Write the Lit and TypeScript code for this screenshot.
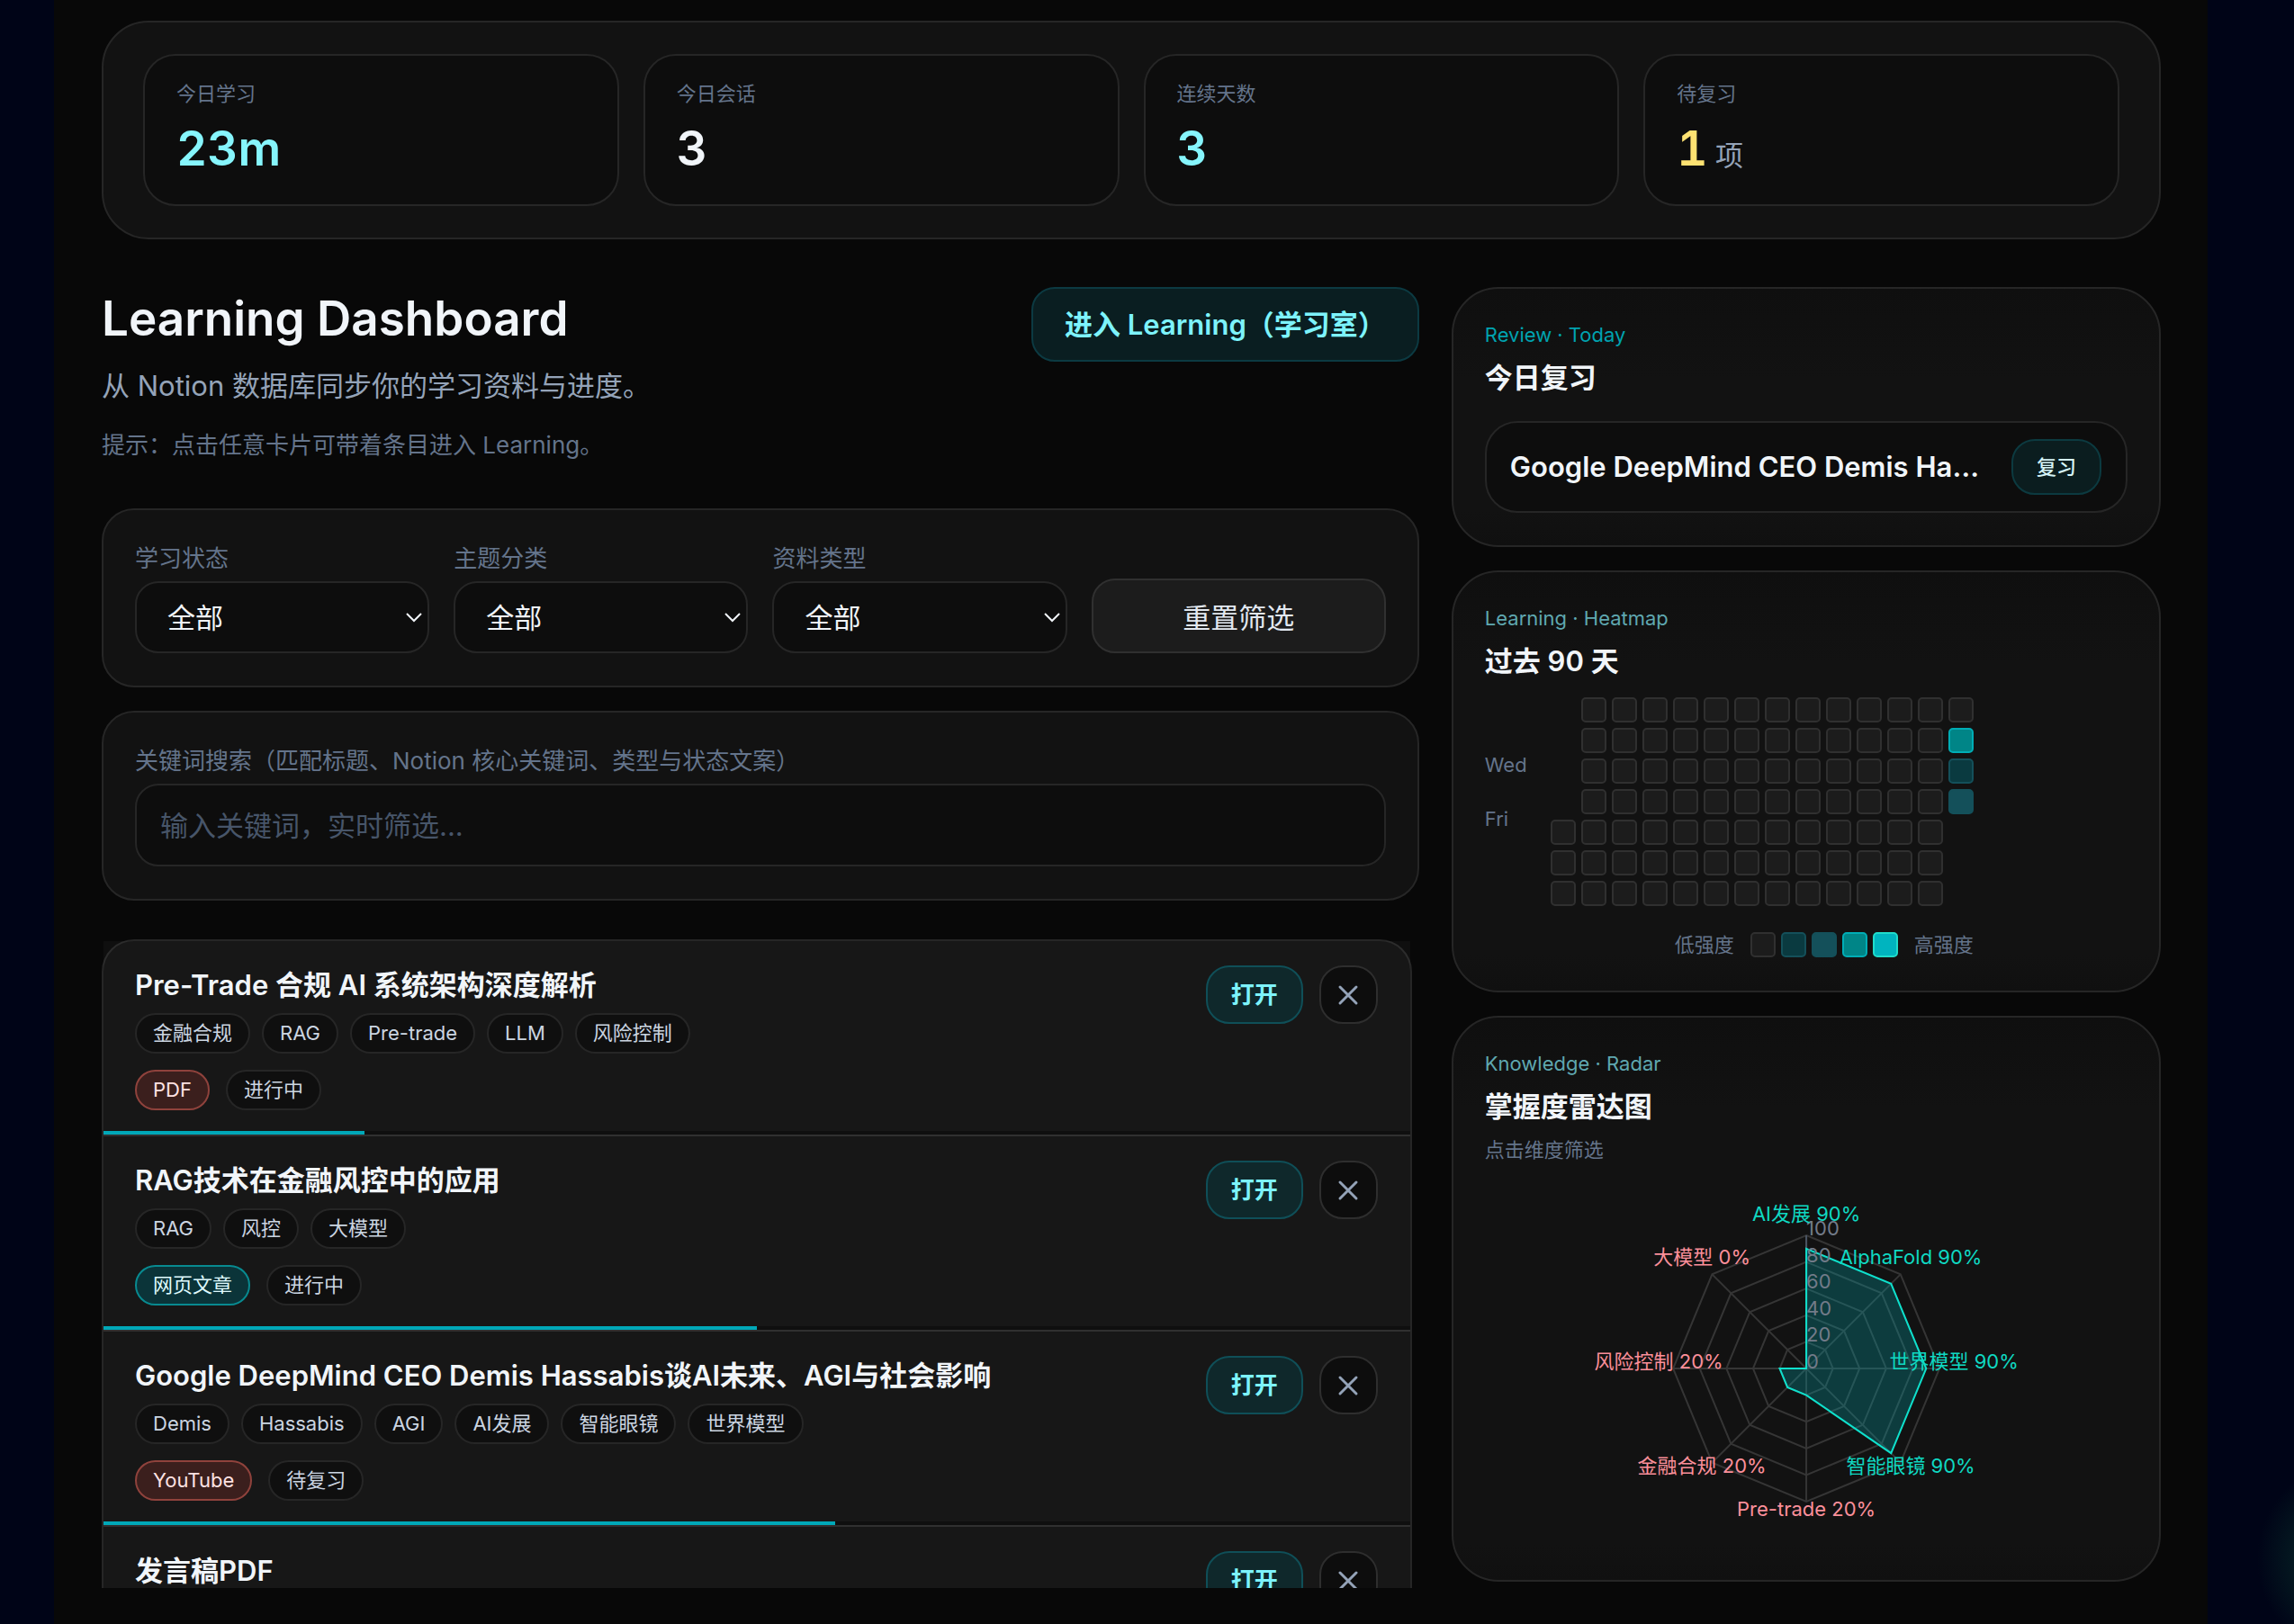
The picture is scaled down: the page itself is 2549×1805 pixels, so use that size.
import { LitElement, html, css, svg } from "lit";
import { customElement, state } from "lit/decorators.js";
import { classMap } from "lit/directives/class-map.js";
import { styleMap } from "lit/directives/style-map.js";

interface Entry {
  title: string;
  keywords: string[];
  type: string;
  tone: "red" | "teal";
  status: string;
  progress: number;
}

const STATS = [
  { label: "今日学习", value: "23m", tone: "cyan", unit: "" },
  { label: "今日会话", value: "3", tone: "plain", unit: "" },
  { label: "连续天数", value: "3", tone: "cyan", unit: "" },
  { label: "待复习", value: "1", tone: "amber", unit: "项" },
];

const FILTERS = [
  { id: "status", label: "学习状态" },
  { id: "topic", label: "主题分类" },
  { id: "kind", label: "资料类型" },
];

const ENTRIES: Entry[] = [
  {
    title: "Pre-Trade 合规 AI 系统架构深度解析",
    keywords: ["金融合规", "RAG", "Pre-trade", "LLM", "风险控制"],
    type: "PDF",
    tone: "red",
    status: "进行中",
    progress: 20,
  },
  {
    title: "RAG技术在金融风控中的应用",
    keywords: ["RAG", "风控", "大模型"],
    type: "网页文章",
    tone: "teal",
    status: "进行中",
    progress: 50,
  },
  {
    title: "Google DeepMind CEO Demis Hassabis谈AI未来、AGI与社会影响",
    keywords: ["Demis", "Hassabis", "AGI", "AI发展", "智能眼镜", "世界模型"],
    type: "YouTube",
    tone: "red",
    status: "待复习",
    progress: 56,
  },
  {
    title: "发言稿PDF",
    keywords: [],
    type: "PDF",
    tone: "red",
    status: "进行中",
    progress: 0,
  },
];

const WEEKDAYS = ["", "", "Wed", "", "Fri", "", ""];
const WEEKS = 14;
// Activity level by "week-weekday"; every other day is level 0.
const ACTIVITY: Record<string, number> = { "13-1": 3, "13-2": 1, "13-3": 2 };

const SKILLS = [
  { name: "AI发展", value: 90 },
  { name: "AlphaFold", value: 90 },
  { name: "世界模型", value: 90 },
  { name: "智能眼镜", value: 90 },
  { name: "Pre-trade", value: 20 },
  { name: "金融合规", value: 20 },
  { name: "风险控制", value: 20 },
  { name: "大模型", value: 0 },
];

const panelBase = css`
  *,
  *::before,
  *::after {
    box-sizing: border-box;
  }
  h1,
  h2,
  h3,
  p,
  ul,
  dl,
  dd {
    margin: 0;
    padding: 0;
  }
  button,
  input,
  select {
    font: inherit;
    color: inherit;
    margin: 0;
  }
  button {
    cursor: pointer;
  }
  .panel {
    border: 2px solid #262626;
    background: #121212;
  }
  .side {
    border-radius: 52px;
    padding: 35px 35px 36px;
    background: linear-gradient(#0f0f0f, #121212 100px, #121212 calc(100% - 40px), #101010);
  }
  .kicker {
    font-size: 22px;
    line-height: 32px;
    color: #5fa8b0;
  }
  .kicker.strong {
    color: #00a3b0;
  }
  .name {
    font-size: 31px;
    line-height: 44px;
    font-weight: 600;
    color: #f1f5f9;
    margin-top: 10px;
  }
`;

@customElement("review-card")
export class ReviewCard extends LitElement {
  static styles = [
    panelBase,
    css`
      :host {
        display: block;
      }
      .due {
        display: flex;
        align-items: center;
        gap: 27px;
        margin-top: 26px;
        padding: 18px 27px 18px 26px;
        border: 2px solid #262626;
        border-radius: 36px;
        background: #0d0d0d;
      }
      .what {
        flex: 1;
        min-width: 0;
        overflow: hidden;
        white-space: nowrap;
        text-overflow: ellipsis;
        font-size: 31px;
        line-height: 44px;
        font-weight: 600;
        color: #f1f5f9;
      }
      .go {
        flex: none;
        border: 2px solid #0c3a40;
        border-radius: 26px;
        padding: 13px 26px;
        background: #0b1d1f;
        font-size: 22px;
        line-height: 32px;
        font-weight: 500;
        color: #d5f3f6;
      }
    `,
  ];

  render() {
    return html`<section class="panel side">
      <p class="kicker strong">Review · Today</p>
      <h2 class="name">今日复习</h2>
      <div class="due">
        <span class="what">Google DeepMind CEO Demis Hassabis谈AI未来、AGI与社会影响</span>
        <button class="go" type="button">复习</button>
      </div>
    </section>`;
  }
}

@customElement("heatmap-card")
export class HeatmapCard extends LitElement {
  static styles = [
    panelBase,
    css`
      :host {
        display: block;
      }
      .map {
        display: inline-grid;
        grid-template-columns: auto auto;
        column-gap: 26px;
        row-gap: 29px;
        margin-top: 18px;
        font-size: 22px;
        line-height: 30px;
        color: #64748b;
      }
      .side {
        padding-bottom: 37px;
      }
      .days {
        display: grid;
        grid-auto-rows: 30px;
        align-content: start;
      }
      .cells {
        display: grid;
        grid-template-rows: repeat(7, 28px);
        grid-auto-flow: column;
        grid-auto-columns: 28px;
        gap: 6px;
      }
      .cell {
        width: 28px;
        height: 28px;
        border-radius: 5px;
        border: 2px solid #303030;
        background: #1c1c1c;
      }
      .blank {
        visibility: hidden;
      }
      .l1 {
        background: #0a3a40;
        border-color: #14505a;
      }
      .l2 {
        background: #14505a;
        border-color: #14505a;
      }
      .l3 {
        background: #008587;
        border-color: #00adb5;
      }
      .l4 {
        background: #00b4bf;
        border-color: #1fdccb;
      }
      .legend {
        grid-column: 1 / -1;
        display: flex;
        justify-content: flex-end;
        align-items: center;
        gap: 18px;
        line-height: 28px;
      }
      .scale {
        display: flex;
        gap: 6px;
      }
    `,
  ];

  private cell(week: number, day: number) {
    const blank = (week === 0 && day < 4) || (week === WEEKS - 1 && day > 3);
    const level = ACTIVITY[`${week}-${day}`] ?? 0;
    return html`<span class=${classMap({ cell: true, blank, [`l${level}`]: true })}></span>`;
  }

  render() {
    return html`<section class="panel side">
      <p class="kicker">Learning · Heatmap</p>
      <h2 class="name">过去 90 天</h2>
      <div class="map">
        <div class="days">${WEEKDAYS.map((d) => html`<span>${d}</span>`)}</div>
        <div class="cells">
          ${Array.from({ length: WEEKS * 7 }, (_, i) => this.cell(Math.floor(i / 7), i % 7))}
        </div>
        <div class="legend">
          <span>低强度</span>
          <span class="scale">
            ${[0, 1, 2, 3, 4].map((l) => html`<span class="cell l${l}"></span>`)}
          </span>
          <span>高强度</span>
        </div>
      </div>
    </section>`;
  }
}

@customElement("radar-card")
export class RadarCard extends LitElement {
  static styles = [
    panelBase,
    css`
      :host {
        display: block;
      }
      .hint {
        font-size: 22px;
        line-height: 32px;
        color: #64748b;
        margin-top: 10px;
      }
      .chart {
        display: block;
        width: 100%;
        height: 426px;
        overflow: visible;
        font-size: 22px;
      }
      .grid {
        fill: none;
        stroke: #353535;
        stroke-width: 2;
      }
      .axis {
        stroke: #4b5563;
        stroke-width: 2;
      }
      .area {
        fill: #00adb5;
        fill-opacity: 0.27;
        stroke: #0fe0cc;
        stroke-width: 2;
      }
      .tick {
        fill: #727b89;
      }
      .label {
        text-anchor: middle;
        fill: #0fd9c2;
      }
      .low {
        fill: #fb8f9a;
      }
    `,
  ];

  private point(index: number, radius: number): [number, number] {
    const angle = (index * Math.PI) / 4;
    return [Math.sin(angle) * radius, -Math.cos(angle) * radius];
  }

  render() {
    const full = 148;
    const ring = (r: number) => SKILLS.map((_, i) => this.point(i, r).join(",")).join(" ");
    const area = SKILLS.map((s, i) => this.point(i, (full * s.value) / 100).join(",")).join(" ");
    return html`<section class="panel side">
      <p class="kicker">Knowledge · Radar</p>
      <h2 class="name">掌握度雷达图</h2>
      <p class="hint">点击维度筛选</p>
      <svg class="chart" viewBox="-213 -227 426 426" role="img" aria-label="掌握度雷达图">
        ${[20, 40, 60, 80, 100].map(
          (v) => svg`<polygon class="grid" points=${ring((full * v) / 100)}></polygon>`
        )}
        ${SKILLS.map((_, i) => {
          const [x, y] = this.point(i, full);
          return svg`<line class="grid" x1="0" y1="0" x2=${x} y2=${y}></line>`;
        })}
        <line class="axis" x1="0" y1="0" x2="0" y2=${-full}></line>
        <polygon class="area" points=${area}></polygon>
        ${[0, 20, 40, 60, 80, 100].map(
          (v) => svg`<text class="tick" x="0" y=${(-full * v) / 100}>${v}</text>`
        )}
        ${SKILLS.map((s, i) => {
          const [x, y] = this.point(i, 164);
          return svg`<text class="label ${s.value < 60 ? "low" : ""}" x=${x} y=${y}>${s.name} ${s.value}%</text>`;
        })}
      </svg>
    </section>`;
  }
}

@customElement("entry-row")
export class EntryRow extends LitElement {
  static properties = { entry: { attribute: false } };
  declare entry: Entry;

  static styles = [
    panelBase,
    css`
      :host {
        display: block;
        border-bottom: 2px solid #303030;
        background: rgba(255, 255, 255, 0.03);
      }
      .row {
        display: flex;
        align-items: flex-start;
        gap: 18px;
        padding: 27px 36px 23px 35px;
      }
      .main {
        flex: 1;
        min-width: 0;
      }
      .title {
        font-size: 31px;
        line-height: 44px;
        font-weight: 600;
        color: #f1f5f9;
      }
      .chips {
        display: flex;
        flex-wrap: wrap;
        gap: 13px;
        margin-top: 9px;
      }
      .meta {
        gap: 18px;
        margin-top: 18px;
      }
      .chip {
        border: 2px solid #262626;
        border-radius: 23px;
        padding: 0 18px;
        background: #0f0f0f;
        font-size: 22px;
        line-height: 41px;
        color: #cbd5e1;
      }
      .red {
        border-color: #8f423c;
        background: #3b1f1d;
        color: #fee2e2;
      }
      .teal {
        border-color: #088a90;
        background: #0b3439;
        color: #dffafd;
      }
      .open,
      .drop {
        flex: none;
        height: 65px;
        border-radius: 26px;
      }
      .open {
        border: 2px solid #0f4f58;
        padding: 0 26px;
        background: #0f282b;
        font-size: 26px;
        line-height: 36px;
        font-weight: 600;
        color: #7df3fb;
      }
      .drop {
        display: grid;
        place-items: center;
        width: 65px;
        border: 2px solid #2e2e2e;
        padding: 0;
        background: #0d0d0d;
        color: #94a3b8;
      }
      .track {
        height: 4px;
        background: #0f0f0f;
      }
      .fill {
        height: 4px;
        background: #00a8b8;
      }
    `,
  ];

  render() {
    const e = this.entry;
    return html`<div class="row">
        <div class="main">
          <h3 class="title">${e.title}</h3>
          <div class="chips">${e.keywords.map((k) => html`<span class="chip">${k}</span>`)}</div>
          <div class="chips meta">
            <span class="chip ${e.tone}">${e.type}</span>
            <span class="chip">${e.status}</span>
          </div>
        </div>
        <button class="open" type="button">打开</button>
        <button class="drop" type="button" aria-label="移除">
          <svg width="36" height="36" viewBox="0 0 24 24" fill="none" stroke="currentColor" stroke-width="2" stroke-linecap="round">
            <path d="M18 6 6 18M6 6l12 12"></path>
          </svg>
        </button>
      </div>
      <div class="track"><div class="fill" style=${styleMap({ width: `${e.progress}%` })}></div></div>`;
  }
}

@customElement("app-root")
export class AppRoot extends LitElement {
  @state() private query = "";

  static styles = [
    panelBase,
    css`
      :host {
        display: block;
        height: 100vh;
        overflow: hidden;
        padding: 0 96px 0 60px;
        background: radial-gradient(circle at calc(100% + 71px) calc(100% - 72px), #0b3a30, rgba(11, 58, 48, 0) 112px), #000417;
        font-family: Inter, "Noto Sans CJK SC", sans-serif;
        color: #f1f5f9;
      }
      .shell {
        display: flex;
        flex-direction: column;
        height: 100%;
        padding: 23px 52px 40px 53px;
        background: #080808;
      }
      .stats {
        display: grid;
        grid-template-columns: repeat(4, 1fr);
        gap: 27px;
        padding: 35px 44px;
        border-radius: 52px;
      }
      .stat {
        border: 2px solid #262626;
        border-radius: 36px;
        padding: 26px 35px 30px;
        background: #0d0d0d;
      }
      .stat dt {
        font-size: 22px;
        line-height: 32px;
        color: #64748b;
      }
      .stat dd {
        margin-top: 13px;
        font-size: 53px;
        line-height: 64px;
        font-weight: 600;
        font-variant-numeric: tabular-nums;
      }
      .cyan {
        color: #86f5fc;
      }
      .plain {
        color: #f1f5f9;
      }
      .amber {
        color: #fde272;
      }
      .unit {
        font-size: 31px;
        line-height: 1;
        font-weight: 400;
        color: #94a3b8;
      }
      .columns {
        flex: 1;
        min-height: 0;
        display: grid;
        grid-template-columns: minmax(0, 13fr) minmax(0, 7fr);
        gap: 36px;
        margin-top: 53px;
      }
      .left {
        display: flex;
        flex-direction: column;
        min-height: 0;
      }
      .right {
        display: flex;
        flex-direction: column;
        gap: 26px;
      }
      .head {
        display: flex;
        justify-content: space-between;
        align-items: flex-start;
      }
      .heading {
        font-size: 53px;
        line-height: 70px;
        font-weight: 600;
      }
      .sub {
        margin-top: 18px;
        font-size: 31px;
        line-height: 44px;
        color: #94a3b8;
      }
      .tip {
        margin-top: 26px;
        font-size: 26px;
        line-height: 36px;
        color: #64748b;
      }
      .enter {
        border: 2px solid #0c3a42;
        border-radius: 26px;
        padding: 0 35px 4px;
        height: 83px;
        background: #0a1e21;
        font-size: 31px;
        font-weight: 600;
        color: #7df3fb;
      }
      .filters,
      .search {
        border-radius: 36px;
        padding: 36px 35px;
      }
      .filters {
        display: grid;
        grid-template-columns: repeat(4, 1fr);
        align-items: end;
        gap: 27px;
        margin-top: 52px;
      }
      .search {
        margin-top: 26px;
      }
      .field {
        display: flex;
        flex-direction: column;
        gap: 7px;
      }
      .field label {
        font-size: 26px;
        line-height: 36px;
        color: #64748b;
      }
      .pick {
        display: grid;
        align-items: center;
      }
      .pick > * {
        grid-area: 1 / 1;
      }
      .chevron {
        justify-self: end;
        margin-right: 7px;
        pointer-events: none;
      }
      .select,
      .input {
        width: 100%;
        border: 2px solid #262626;
        border-radius: 26px;
        background: #0d0d0d;
        font-size: 31px;
        color: #f1f5f9;
        outline: none;
      }
      .select {
        appearance: none;
        height: 80px;
        padding: 0 34px;
      }
      .input {
        height: 92px;
        padding: 0 26px;
      }
      .input::placeholder {
        color: #475569;
        opacity: 1;
      }
      .reset {
        height: 83px;
        border: 2px solid #303030;
        border-radius: 26px;
        background: #1c1c1c;
        font-size: 31px;
        color: #e2e8f0;
      }
      .list {
        margin: 43px 8px 0 0;
        min-height: 0;
        flex: 1;
        overflow: hidden;
      }
      .entries {
        border: 2px solid #262626;
        border-radius: 36px;
        background: #101010;
      }
    `,
  ];

  render() {
    const entries = ENTRIES.filter((e) =>
      [e.title, e.type, e.status, ...e.keywords].join(" ").includes(this.query)
    );
    return html`<main class="shell">
      <dl class="panel stats">
        ${STATS.map(
          (s) => html`<div class="stat">
            <dt>${s.label}</dt>
            <dd class=${s.tone}>${s.value}${s.unit ? html`<span class="unit"> ${s.unit}</span>` : ""}</dd>
          </div>`
        )}
      </dl>
      <div class="columns">
        <div class="left">
          <header class="head">
            <div>
              <h1 class="heading">Learning Dashboard</h1>
              <p class="sub">从 Notion 数据库同步你的学习资料与进度。</p>
              <p class="tip">提示：点击任意卡片可带着条目进入 Learning。</p>
            </div>
            <button class="enter" type="button">进入 Learning（学习室）</button>
          </header>
          <form class="panel filters" @submit=${(e: Event) => e.preventDefault()}>
            ${FILTERS.map(
              (f) => html`<div class="field">
                <label for=${f.id}>${f.label}</label>
                <div class="pick">
                  <select class="select" id=${f.id}>
                    <option>全部</option>
                  </select>
                  <svg class="chevron" width="20" height="12" viewBox="0 0 20 12" fill="none" stroke="#f1f5f9" stroke-width="2">
                    <path d="M2 2l8 8 8-8"></path>
                  </svg>
                </div>
              </div>`
            )}
            <button class="reset" type="reset">重置筛选</button>
          </form>
          <div class="panel search">
            <div class="field">
              <label for="keyword">关键词搜索（匹配标题、Notion 核心关键词、类型与状态文案）</label>
              <input
                class="input"
                id="keyword"
                type="text"
                placeholder="输入关键词，实时筛选..."
                @input=${(e: Event) => (this.query = (e.target as HTMLInputElement).value)}
              />
            </div>
          </div>
          <div class="list">
            <div class="entries">${entries.map((e) => html`<entry-row .entry=${e}></entry-row>`)}</div>
          </div>
        </div>
        <aside class="right">
          <review-card></review-card>
          <heatmap-card></heatmap-card>
          <radar-card></radar-card>
        </aside>
      </div>
    </main>`;
  }
}
